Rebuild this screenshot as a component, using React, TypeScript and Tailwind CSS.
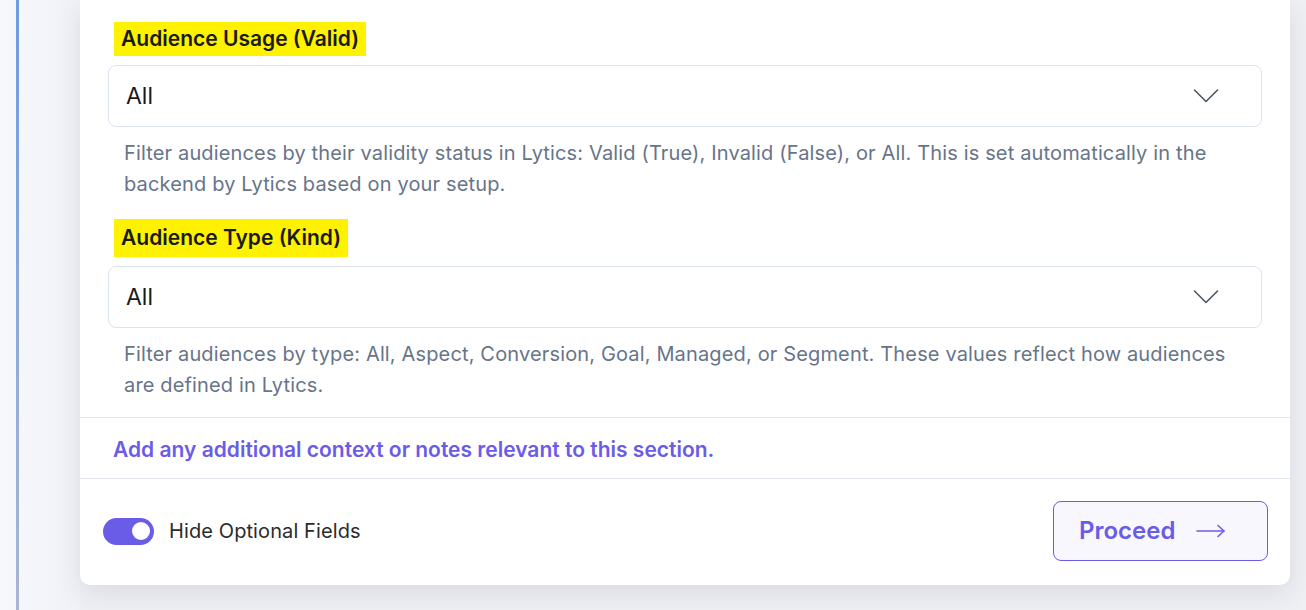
import React, { useState } from 'react';

const font = { fontFamily: 'Inter, "Noto Sans", sans-serif' };

function Chevron() {
  return (
    <svg width="26" height="16" viewBox="0 0 26 16" fill="none">
      <polyline points="1.5,2 13,13.5 24.5,2" stroke="#4b5563" strokeWidth="1.6" strokeLinecap="round" strokeLinejoin="round" />
    </svg>);

}

function SelectField({ label, help, tall }: {label: string;help: string[];tall?: boolean;}) {
  return (
    <div>
      <div className={`inline-block ml-[6px] bg-[#fff200] px-[7px] text-[21px] font-semibold text-[#1a1a1a] ${tall ? 'h-[38px] leading-[38px]' : 'h-[34px] leading-[34px]'}`}>
        {label}
      </div>
      <div className="mt-[9px] flex h-[62px] items-center justify-between rounded-[8px] border border-[#dde3ee] bg-white pl-[17px] pr-[42px]">
        <span className="text-[23px] text-[#1a1a1a]">All</span>
        <Chevron />
      </div>
      <p className="mt-[11px] pl-[16px] text-[20px] leading-[31px] tracking-[0.15px] text-[#677489]">
        {help[0]}
        <br />
        {help[1]}
      </p>
    </div>);

}

export default function App() {
  const [hideOptional, setHideOptional] = useState(true);
  return (
    <div className="flex h-[610px] w-[1306px] overflow-hidden bg-[#eff0f4]" style={font}>
      <div className="flex h-full w-[80px] shrink-0 bg-gradient-to-r from-[#f6f8fc] to-[#f0f2f7]">
        <div className="ml-4 h-full w-[3px] bg-gradient-to-b from-[#6e9be2] to-[#a9b6d2]" />
      </div>

      <div className="flex w-[1210px] shrink-0 flex-col">
        <div className="rounded-b-[10px] bg-white shadow-[0_8px_28px_rgba(30,40,70,0.10)]">
          <div className="flex flex-col gap-[19px] px-[28px] pt-[22px] pb-[16px]">
            <SelectField
              label="Audience Usage (Valid)"
              help={[
              'Filter audiences by their validity status in Lytics: Valid (True), Invalid (False), or All. This is set automatically in the',
              'backend by Lytics based on your setup.']
              } />
            
            <SelectField
              tall
              label="Audience Type (Kind)"
              help={[
              'Filter audiences by type: All, Aspect, Conversion, Goal, Managed, or Segment. These values reflect how audiences',
              'are defined in Lytics.']
              } />
            
          </div>

          <div className="flex h-[62px] items-center border-y border-[#e1e5ed] px-[33px] pt-[3px]">
            <span className="text-[21px] font-semibold text-[#6b5ce7]">
              Add any additional context or notes relevant to this section.
            </span>
          </div>

          <div className="flex items-center justify-between pl-[23px] pr-[22px] pt-[22px] pb-[24px]">
            <button
              type="button"
              onClick={() => setHideOptional(!hideOptional)}
              className="flex items-center gap-[15px]">
              
              <span className={`flex h-[27px] w-[51px] items-center rounded-full px-[4px] ${hideOptional ? 'justify-end bg-[#6b5ce7]' : 'justify-start bg-[#d1d5db]'}`}>
                <span className="h-[18px] w-[18px] rounded-full bg-white" />
              </span>
              <span className="text-[20px] tracking-[0.1px] text-[#2b2b2b]">Hide Optional Fields</span>
            </button>

            <button
              type="button"
              className="flex h-[60px] w-[215px] items-center gap-[21px] rounded-[8px] border border-[#6b5ce7] bg-[#f8f7fe] pl-[25px]">
              
              <span className="text-[24px] font-semibold text-[#6b5ce7]">Proceed</span>
              <svg width="30" height="14" viewBox="0 0 30 14" fill="none">
                <line x1="1" y1="7" x2="28" y2="7" stroke="#6b5ce7" strokeWidth="1.6" strokeLinecap="round" />
                <polyline points="22,1.5 28,7 22,12.5" stroke="#6b5ce7" strokeWidth="1.6" strokeLinecap="round" strokeLinejoin="round" />
              </svg>
            </button>
          </div>
        </div>
      </div>
    </div>);

}
